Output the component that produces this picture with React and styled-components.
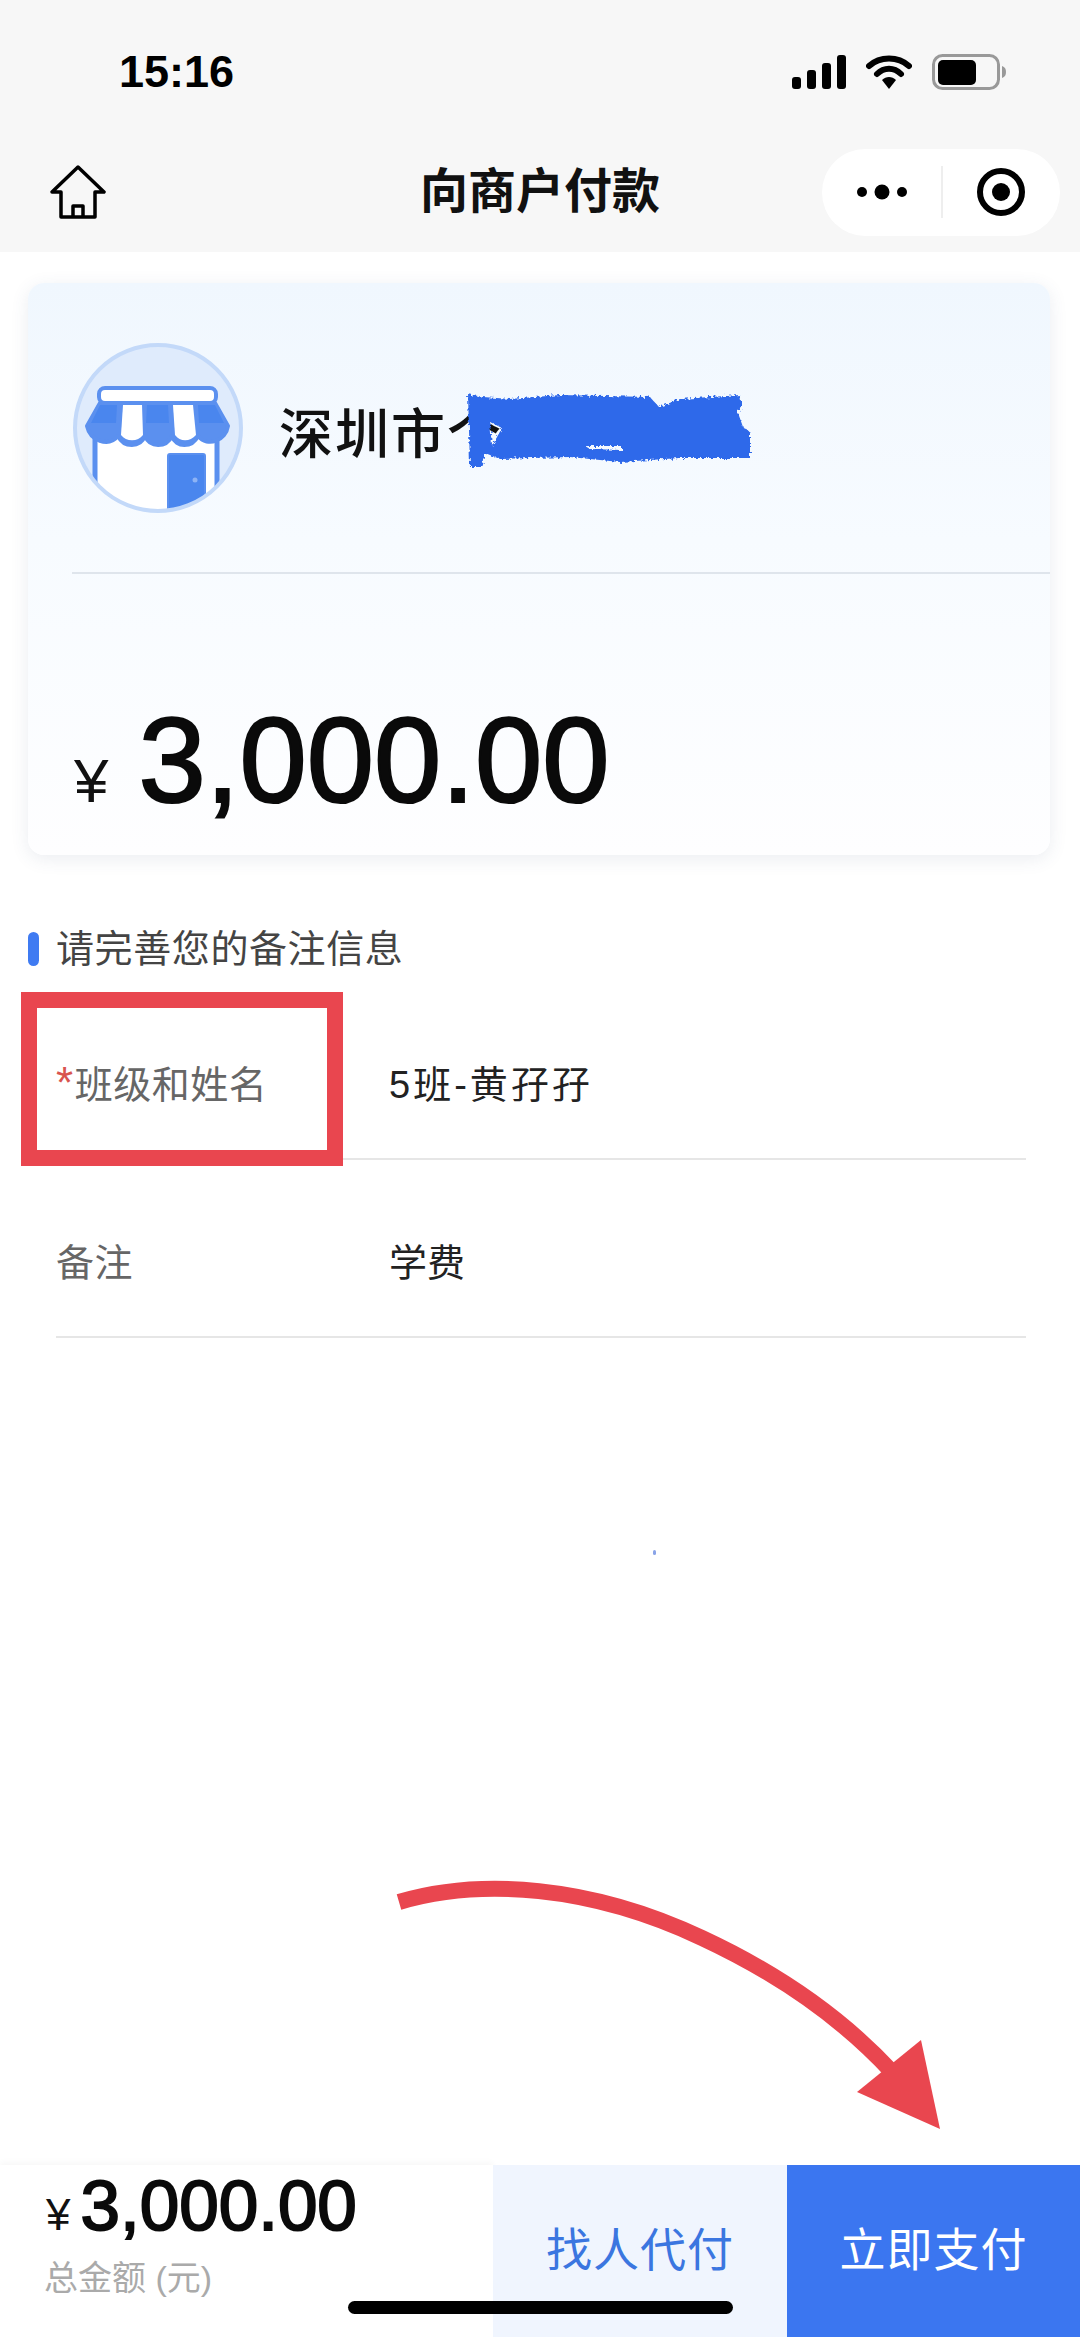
import React from 'react'
import styled, { createGlobalStyle } from 'styled-components'

const Global = createGlobalStyle`
  html, body {
    margin: 0;
    padding: 0;
    background: #fff;
  }
  * {
    box-sizing: border-box;
  }
`

const sans = `"Liberation Sans", "Noto Sans CJK SC", sans-serif`

const Page = styled.div`
  position: relative;
  width: 1080px;
  height: 2337px;
  overflow: hidden;
  display: flex;
  flex-direction: column;
  background: #fff;
  font-family: ${sans};
`
const Header = styled.header`
  height: 252px;
  background: #f7f7f7;
  flex: none;
`
const StatusBar = styled.div`
  height: 144px;
  display: flex;
  align-items: center;
  justify-content: space-between;
  padding: 0 73px 0 119px;
`
const Time = styled.span`
  font-size: 45px;
  font-weight: 700;
  color: #000;
`
const StatusIcons = styled.div`
  display: flex;
  align-items: center;
  gap: 20px;
`
const NavBar = styled.div`
  position: relative;
  height: 96px;
  display: flex;
  align-items: center;
  justify-content: space-between;
  padding: 0 20px 0 50px;
`
const NavTitle = styled.h1`
  position: absolute;
  left: 0;
  right: 0;
  top: 20px;
  margin: 0;
  line-height: 56px;
  text-align: center;
  font-size: 48px;
  font-weight: 700;
  color: #111;
`
const Capsule = styled.div`
  position: relative;
  width: 238px;
  height: 87px;
  border-radius: 44px;
  background: #fff;
  display: flex;
  align-items: center;
  justify-content: center;
`
const MoreDots = styled.svg`
  margin-right: 68px;
`
const CapsuleLine = styled.i`
  position: absolute;
  left: 119px;
  top: 17px;
  width: 2px;
  height: 52px;
  background: #eee;
`
const Card = styled.section`
  margin: 31px 30px 0 28px;
  height: 572px;
  border-radius: 16px;
  background: linear-gradient(180deg, #f0f7fe 0%, #f7fbff 45%, #fefeff 100%);
  box-shadow: 0 4px 18px rgba(60, 80, 120, 0.1);
  display: flex;
  flex-direction: column;
  flex: none;
`
const Merchant = styled.div`
  height: 291px;
  margin-left: 44px;
  border-bottom: 2px solid #dfe5ec;
  display: flex;
  align-items: center;
  gap: 36px;
`
const Avatar = styled.svg`
  display: block;
  width: 170px;
  height: 170px;
  margin-left: 1px;
  flex: none;
`
const NameWrap = styled.div`
  position: relative;
  margin-top: 6px;
`
const Name = styled.span`
  font-size: 54px;
  letter-spacing: 2px;
  color: #111;
  font-weight: 500;
`
const Scribble = styled.svg`
  position: absolute;
  left: 161px;
  top: -19px;
  width: 340px;
  height: 110px;
`
const AmountRow = styled.div`
  flex: 1;
  display: flex;
  align-items: baseline;
  padding: 126px 0 0 46px;
`
const Yen = styled.span`
  font-size: ${p => p.$size}px;
  color: #111;
  margin-right: ${p => p.$gap}px;
`
const BigAmount = styled.span`
  font-size: 121px;
  line-height: 1;
  font-weight: 400;
  color: #0a0a0a;
  -webkit-text-stroke: 2.2px #0a0a0a;
`
const SectionTitle = styled.h2`
  margin: 68px 0 0 28px;
  display: flex;
  align-items: center;
  gap: 17px;
  font-size: 38px;
  letter-spacing: 0.6px;
  line-height: 52px;
  font-weight: 400;
  color: #444;
`
const TitleMark = styled.i`
  display: block;
  width: 11px;
  height: 34px;
  border-radius: 6px;
  background: #3f7bf2;
`
const Rows = styled.div`
  margin: 7px 54px 0 56px;
`
const Row = styled.div`
  position: relative;
  height: 178px;
  padding-top: 22px;
  border-bottom: 2px solid #e6e6e6;
  display: flex;
  align-items: center;
  font-size: 38px;
`
const Label = styled.span`
  width: 333px;
  color: #666;
  flex: none;
  letter-spacing: 0.5px;
`
const Star = styled.span`
  color: #d9544f;
  font-size: 44px;
  line-height: 1;
  margin-right: 1px;
`
const Value = styled.span`
  color: #222;
  letter-spacing: ${p => p.$spacing}px;
`
const RedBox = styled.div`
  position: absolute;
  left: -35px;
  top: 10px;
  width: 322px;
  height: 174px;
  border: 16px solid #e9464f;
`
const Speck = styled.i`
  position: absolute;
  left: 653px;
  top: 1550px;
  width: 3px;
  height: 5px;
  border-radius: 2px;
  background: #8aa4e8;
`
const Arrow = styled.svg`
  position: absolute;
  left: 380px;
  top: 1870px;
  width: 580px;
  height: 270px;
`
const Footer = styled.footer`
  margin-top: auto;
  height: 172px;
  display: flex;
  flex: none;
`
const Total = styled.div`
  width: 493px;
  padding: 0 0 0 46px;
  box-shadow: 0 -3px 6px rgba(0, 0, 0, 0.03);
`
const TotalAmount = styled.div`
  display: flex;
  align-items: baseline;
  height: 86px;
`
const SmallAmount = styled.span`
  font-size: 71px;
  font-weight: 400;
  color: #0a0a0a;
  -webkit-text-stroke: 2px #0a0a0a;
`
const TotalLabel = styled.div`
  font-size: 34px;
  color: #aaa;
  margin-left: -2px;
`
const PayButton = styled.button`
  width: ${p => p.$width}px;
  border: 0;
  padding: 0 0 10px;
  font-family: inherit;
  font-size: 46px;
  letter-spacing: 1px;
  background: ${p => (p.$primary ? '#3b76f0' : '#f0f5fe')};
  color: ${p => (p.$primary ? '#fff' : '#3b76e0')};
`
const HomeBar = styled.div`
  position: absolute;
  left: 348px;
  top: 2301px;
  width: 385px;
  height: 13px;
  border-radius: 7px;
  background: #000;
`

const SignalIcon = () => (
  <svg width="54" height="34" viewBox="0 0 54 34">
    <rect x="0" y="22" width="9" height="12" rx="3" />
    <rect x="15" y="15" width="9" height="19" rx="3" />
    <rect x="30" y="8" width="9" height="26" rx="3" />
    <rect x="45" y="0" width="9" height="34" rx="3" />
  </svg>
)

const WifiIcon = () => (
  <svg width="46" height="34" viewBox="0 0 46 34">
    <path d="M3 11 C14 1 32 1 43 11" fill="none" stroke="#000" strokeWidth="6" strokeLinecap="round" />
    <path d="M11 19 C18 12 28 12 35 19" fill="none" stroke="#000" strokeWidth="6" strokeLinecap="round" />
    <path d="M16 25 C20 21 26 21 30 25 L23 34 Z" />
  </svg>
)

const BatteryIcon = () => (
  <svg width="75" height="36" viewBox="0 0 75 36">
    <rect x="1.5" y="1.5" width="65" height="33" rx="9" fill="none" stroke="#999" strokeWidth="3" />
    <rect x="6" y="6" width="38" height="25" rx="5" />
    <path d="M70 12 C73 13 74 15 74 18 C74 21 73 23 70 24 Z" fill="#999" />
  </svg>
)

const HomeIcon = () => (
  <svg width="56" height="54" viewBox="0 0 56 54" fill="none" stroke="#000" strokeWidth="3.5" strokeLinejoin="round">
    <path d="M28 2 L54 27 L45 27 L45 52 L11 52 L11 27 L2 27 Z" />
    <path d="M23 52 L23 41 L33 41 L33 52" />
  </svg>
)

const MoreIcon = () => (
  <MoreDots width="52" height="16" viewBox="0 0 52 16">
    <circle cx="6" cy="8" r="5" />
    <circle cx="26" cy="8" r="7.5" />
    <circle cx="46" cy="8" r="5" />
  </MoreDots>
)

const TargetIcon = () => (
  <svg width="50" height="50" viewBox="0 0 50 50">
    <circle cx="25" cy="25" r="21" fill="none" stroke="#000" strokeWidth="6" />
    <circle cx="25" cy="25" r="9" />
  </svg>
)

const ShopAvatar = () => (
  <Avatar viewBox="23 23 170 170">
    <defs>
      <clipPath id="shopClip">
        <circle cx="108" cy="108" r="83" />
      </clipPath>
    </defs>
    <circle cx="108" cy="108" r="83" fill="#dfebfc" />
    <g clipPath="url(#shopClip)">
      <rect x="45" y="100" width="122" height="110" fill="#fff" stroke="#5b90ef" strokeWidth="5" />
      <rect x="118" y="134" width="37" height="70" rx="2" fill="#4a86ee" stroke="#5b90ef" strokeWidth="2" />
      <circle cx="145" cy="160" r="2.5" fill="#8db3f5" />
    </g>
    <path
      d="M50 83 L37 106 C40 120 58 128 68 116 C74 128 90 128 95 116 C100 128 116 128 122 116 C126 128 142 128 148 116 C158 128 176 120 178 106 L165 83 Z"
      fill="#5b90ef"
      stroke="#5b90ef"
      strokeWidth="4"
      strokeLinejoin="round"
    />
    <path d="M50 85 L67 85 L66 103 L41 103 Z" fill="#4a86ee" />
    <path d="M97 85 L118 85 L119 103 L96 103 Z" fill="#4a86ee" />
    <path d="M148 85 L165 85 L174 103 L149 103 Z" fill="#4a86ee" />
    <path d="M73 85 L92 85 L93 115 C88 122 76 122 71 115 Z" fill="#fff" />
    <path d="M123 85 L143 85 L146 115 C140 122 130 122 125 115 Z" fill="#fff" />
    <rect x="49" y="68" width="117" height="15" rx="6" fill="#fff" stroke="#5b90ef" strokeWidth="4" />
    <circle cx="108" cy="108" r="83" fill="none" stroke="#c3d9f9" strokeWidth="4" />
  </Avatar>
)

const RedactScribble = () => (
  <Scribble viewBox="0 0 340 110">
    <defs>
      <filter id="rough" x="-5%" y="-15%" width="110%" height="130%">
        <feTurbulence type="fractalNoise" baseFrequency="0.35" numOctaves="2" seed="4" />
        <feDisplacementMap in="SourceGraphic" scale="6" />
      </filter>
    </defs>
    <path
      filter="url(#rough)"
      fill="#2f69ea"
      fillRule="evenodd"
      d="M28 22 L43 25 L70 27 L120 23 L210 25 L219 35 L240 27 L300 23 L302 36 L297 38 L303 55 L310 60 L310 86 L240 86 L180 90 L130 85 L60 87 L45 81 L41 95 L30 95 Z M50 50 L62 56 L52 74 Z M145 74 L182 74 L182 78 L150 77 Z"
    />
  </Scribble>
)

const RedArrow = () => (
  <Arrow viewBox="380 1870 580 270">
    <path
      d="M399 1902 C480 1878 590 1885 702 1938 C760 1965 830 2005 892 2072"
      fill="none"
      stroke="#e9464f"
      strokeWidth="16"
    />
    <path d="M921 2040 L940 2129 L857 2092 Z" fill="#e9464f" />
  </Arrow>
)

const App = () => (
  <Page>
    <Global />
    <Header>
      <StatusBar>
        <Time>15:16</Time>
        <StatusIcons>
          <SignalIcon />
          <WifiIcon />
          <BatteryIcon />
        </StatusIcons>
      </StatusBar>
      <NavBar>
        <HomeIcon />
        <NavTitle>向商户付款</NavTitle>
        <Capsule>
          <MoreIcon />
          <CapsuleLine />
          <TargetIcon />
        </Capsule>
      </NavBar>
    </Header>

    <Card>
      <Merchant>
        <ShopAvatar />
        <NameWrap>
          <Name>深圳市个</Name>
          <RedactScribble />
        </NameWrap>
      </Merchant>
      <AmountRow>
        <Yen $size={62} $gap={30}>¥</Yen>
        <BigAmount>3,000.00</BigAmount>
      </AmountRow>
    </Card>

    <SectionTitle>
      <TitleMark />
      请完善您的备注信息
    </SectionTitle>
    <Rows>
      <Row>
        <Label><Star>*</Star>班级和姓名</Label>
        <Value $spacing={3}>5班-黄孖孖</Value>
        <RedBox />
      </Row>
      <Row>
        <Label>备注</Label>
        <Value $spacing={0}>学费</Value>
      </Row>
    </Rows>

    <Speck />
    <RedArrow />

    <Footer>
      <Total>
        <TotalAmount>
          <Yen $size={44} $gap={10}>¥</Yen>
          <SmallAmount>3,000.00</SmallAmount>
        </TotalAmount>
        <TotalLabel>总金额 (元)</TotalLabel>
      </Total>
      <PayButton $width={294}>找人代付</PayButton>
      <PayButton $width={293} $primary>立即支付</PayButton>
    </Footer>
    <HomeBar />
  </Page>
)

export default App
